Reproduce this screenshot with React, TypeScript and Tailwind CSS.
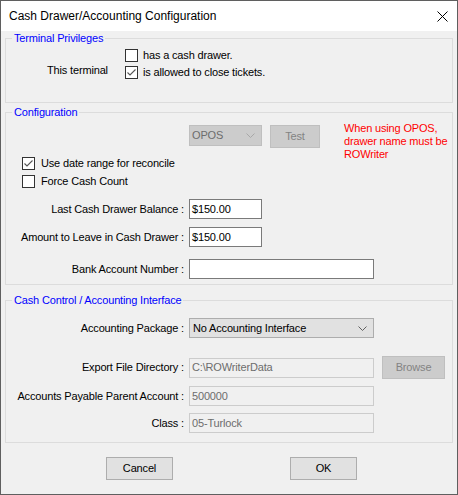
import type { ReactNode } from "react"

const font = { fontFamily: '"Liberation Sans", Arial, sans-serif' }

function Group({ title, className, children }: { title: string; className: string; children: ReactNode }) {
  return (
    <fieldset className={`border border-[#dcdcdc] ${className}`}>
      <legend className="ml-[6px] px-[2px] text-[11px] leading-[13px] text-[#0000ff]">{title}</legend>
      {children}
    </fieldset>
  )
}

function CheckBox({ checked, label, gap = "gap-[5px]" }: { checked?: boolean; label: string; gap?: string }) {
  return (
    <div className={`flex h-[13px] items-center ${gap}`}>
      <div className="flex h-[13px] w-[13px] shrink-0 items-center justify-center border border-[#333333] bg-white">
        {checked && (
          <svg width="11" height="11" viewBox="0 0 11 11">
            <path d="M1.5 5.5 L4 8 L9.5 2.5" fill="none" stroke="#555555" strokeWidth="1.1" />
          </svg>
        )}
      </div>
      <span className="text-[11px] leading-[13px] text-black">{label}</span>
    </div>
  )
}

function Chevron({ color }: { color: string }) {
  return (
    <svg width="9" height="5" viewBox="0 0 9 5">
      <path d="M0.5 0.5 L4.5 4.5 L8.5 0.5" fill="none" stroke={color} strokeWidth="1" />
    </svg>
  )
}

function FieldRow({ label, children, className = "" }: { label: string; children: ReactNode; className?: string }) {
  return (
    <div className={`flex items-center ${className}`}>
      <div className="w-[179px] whitespace-nowrap pr-[1px] text-right text-[11px] leading-[13px] text-black">{label}</div>
      <div className="ml-[4px] flex items-center">{children}</div>
    </div>
  )
}

function TextBox({ value, width, disabled }: { value: string; width: string; disabled?: boolean }) {
  return (
    <div
      className={`flex h-[20px] items-center border px-[2px] text-[11px] ${width} ${
        disabled ? "border-[#cccccc] bg-[#f0f0f0] text-[#6d6d6d]" : "border-[#7a7a7a] bg-white text-black"
      }`}
    >
      {value}
    </div>
  )
}

function Button({ label, width, disabled }: { label: string; width: string; disabled?: boolean }) {
  return (
    <div
      className={`flex h-[23px] items-center justify-center border text-[11px] ${width} ${
        disabled ? "border-[#bfbfbf] bg-[#cccccc] text-[#838383]" : "border-[#adadad] bg-[#e1e1e1] text-black"
      }`}
    >
      {label}
    </div>
  )
}

export default function App() {
  return (
    <div style={font} className="flex h-[495px] w-[458px] flex-col border border-[#5f5f5f] bg-[#f0f0f0]">
      {/* title bar */}
      <div className="flex h-[30px] shrink-0 items-center justify-between bg-white pl-[8px] pr-[9px]">
        <span className="text-[12px] text-black">Cash Drawer/Accounting Configuration</span>
        <svg width="11" height="11" viewBox="0 0 11 11">
          <path d="M0.5 0.5 L10.5 10.5 M10.5 0.5 L0.5 10.5" stroke="#000000" strokeWidth="1" />
        </svg>
      </div>

      <div className="flex flex-col px-[4px] tracking-[-0.16px]">
        {/* Terminal Privileges */}
        <Group title="Terminal Privileges" className="mt-[1px] h-[71px]">
          <div className="flex pt-[4px]">
            <div className="w-[119px] pl-[41px] pt-[15px] text-[11px] leading-[13px] text-black">This terminal</div>
            <div className="flex flex-col gap-[4px]">
              <CheckBox label="has a cash drawer." />
              <CheckBox checked label="is allowed to close tickets." />
            </div>
          </div>
        </Group>

        {/* Configuration */}
        <Group title="Configuration" className="mt-[3px] h-[179px]">
          <div className="flex h-[38px] items-start pl-[183px] pt-[3px]">
            <div className="mt-[3px] flex h-[21px] w-[73px] items-center justify-between border border-[#bfbfbf] bg-[#cccccc] pl-[2px] pr-[6px] text-[11px] text-[#6d6d6d]">
              <span>OPOS</span>
              <Chevron color="#a8a8a8" />
            </div>
            <div className="ml-[8px] mt-[3px]">
              <Button label="Test" width="w-[50px]" disabled />
            </div>
            <div className="ml-[24px] whitespace-nowrap text-[11px] leading-[13px] text-[#ff0000]">
              When using OPOS,
              <br />
              drawer name must be
              <br />
              ROWriter
            </div>
          </div>
          <div className="flex flex-col gap-[5px] pl-[16px]">
            <CheckBox checked label="Use date range for reconcile" gap="gap-[6px]" />
            <CheckBox label="Force Cash Count" gap="gap-[6px]" />
          </div>
          <FieldRow label="Last Cash Drawer Balance :" className="mt-[11px]">
            <TextBox value="$150.00" width="w-[73px]" />
          </FieldRow>
          <FieldRow label="Amount to Leave in Cash Drawer :" className="mt-[8px]">
            <TextBox value="$150.00" width="w-[73px]" />
          </FieldRow>
          <FieldRow label="Bank Account Number :" className="mt-[12px]">
            <TextBox value="" width="w-[185px]" />
          </FieldRow>
        </Group>

        {/* Cash Control / Accounting Interface */}
        <Group title="Cash Control / Accounting Interface" className="mt-[9px] h-[149px]">
          <FieldRow label="Accounting Package :" className="mt-[11px]">
            <div className="flex h-[20px] w-[185px] items-center justify-between border border-[#adadad] bg-[#e1e1e1] pl-[3px] pr-[6px] text-[11px] text-black">
              <span>No Accounting Interface</span>
              <Chevron color="#606060" />
            </div>
          </FieldRow>
          <FieldRow label="Export File Directory :" className="mt-[18px] h-[23px]">
            <TextBox value="C:\ROWriterData" width="w-[185px]" disabled />
            <div className="ml-[8px]">
              <Button label="Browse" width="w-[63px]" disabled />
            </div>
          </FieldRow>
          <FieldRow label="Accounts Payable Parent Account :" className="mt-[7px]">
            <TextBox value="500000" width="w-[185px]" disabled />
          </FieldRow>
          <FieldRow label="Class :" className="mt-[7px]">
            <TextBox value="05-Turlock" width="w-[185px]" disabled />
          </FieldRow>
        </Group>

        {/* buttons */}
        <div className="mt-[14px] flex gap-[117px] pl-[101px]">
          <Button label="Cancel" width="w-[67px]" />
          <Button label="OK" width="w-[67px]" />
        </div>
      </div>
    </div>
  )
}
